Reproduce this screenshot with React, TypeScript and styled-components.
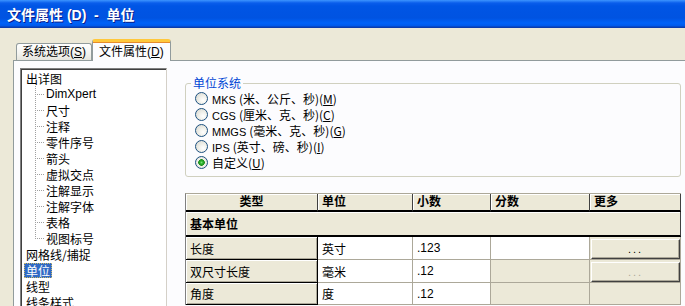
import React from 'react'
import styled, { createGlobalStyle } from 'styled-components'

const GlobalStyle = createGlobalStyle`
  html, body {
    margin: 0;
    padding: 0;
    background: #ECE9D8;
    overflow: hidden;
  }
  body {
    font-family: "Liberation Sans", "Noto Sans CJK SC", sans-serif;
    font-size: 12px;
    color: #000;
  }
`

const Window = styled.div`
  width: 685px;
  height: 306px;
  display: flex;
  flex-direction: column;
  overflow: hidden;
  background: #ECE9D8;
`

const TitleBar = styled.div`
  height: 28px;
  flex-shrink: 0;
  display: flex;
  align-items: center;
  padding-left: 7px;
  box-sizing: border-box;
  background: linear-gradient(
    to bottom,
    #3D95FF 0,
    #0A5DEB 3px,
    #0055E5 6px,
    #0053E1 18px,
    #0062F8 23px,
    #0059EA 26px,
    #0A3CAE 27px,
    #0A3CAE 28px
  );
  color: #fff;
  font: bold 14px "Liberation Sans", "Noto Sans CJK SC", sans-serif;
  text-shadow: 1px 1px 0 #0A1E8C;
  white-space: pre;
`

const Body = styled.div`
  flex: 1;
  min-height: 0;
  display: flex;
  flex-direction: column;
  padding: 11px 0 0 13px;
`

const TabStrip = styled.div`
  display: flex;
  align-items: flex-start;
  height: 21px;
  padding-left: 3px;
  position: relative;
  z-index: 1;
`

const Tab = styled.div<{ $active?: boolean }>`
  box-sizing: border-box;
  height: ${(p) => (p.$active ? '22px' : '17px')};
  margin-top: ${(p) => (p.$active ? '0' : '4px')};
  padding: ${(p) => (p.$active ? '2px 6px 0' : '0 5px')};
  line-height: 16px;
  border: 1px solid #919B9C;
  border-bottom: none;
  border-radius: 3px 3px 0 0;
  background: ${(p) =>
    p.$active ? '#FCFCFE' : 'linear-gradient(to bottom, #FFFFFF, #F3F3EF 60%, #E6E5DD)'};
  border-top: ${(p) => (p.$active ? '3px solid #FFC83C' : '1px solid #919B9C')};
  box-shadow: ${(p) => (p.$active ? 'inset 0 1px 0 #E68B2C' : 'none')};
  white-space: nowrap;
  font-family: "Liberation Sans", "Noto Sans CJK SC", sans-serif;
  font-size: 12px;
`

const U = styled.span`
  text-decoration: underline;
`

const TabPanel = styled.div`
  flex: 1;
  min-height: 0;
  display: flex;
  gap: 18px;
  padding: 7px 0 0 6px;
  background: #FCFCFE;
  border-top: 1px solid #919B9C;
  border-left: 1px solid #919B9C;
`

const TreeBox = styled.div`
  width: 147px;
  flex-shrink: 0;
  box-sizing: border-box;
  background: #fff;
  border-top: 1px solid #808080;
  border-left: 1px solid #808080;
  border-right: 1px solid #D4D0C8;
  box-shadow: inset 1px 1px 0 #404040;
  padding: 1px 0 0 3px;
  font-family: "Noto Sans CJK SC", sans-serif;
`

const TreeRow = styled.div`
  display: flex;
  align-items: center;
  height: 16px;
`

const ChildRow = styled(TreeRow)`
  padding-left: 11px;
`

const Connector = styled.span<{ $last?: boolean }>`
  width: 9px;
  height: 16px;
  flex-shrink: 0;
  background:
    repeating-linear-gradient(to bottom, #A0A0A0 0 1px, transparent 1px 2px) 0 0 /
      1px ${(p) => (p.$last ? '8px' : '16px')} no-repeat,
    repeating-linear-gradient(to right, #A0A0A0 0 1px, transparent 1px 2px) 0 8px / 9px 1px no-repeat;
`

const TreeLabel = styled.span<{ $selected?: boolean; $latin?: boolean }>`
  padding: 0 2px;
  line-height: 15px;
  font-size: 12px;
  white-space: nowrap;
  font-family: ${(p) => (p.$latin ? '"Liberation Sans", sans-serif' : '"Noto Sans CJK SC", sans-serif')};
  background: ${(p) => (p.$selected ? '#316AC5' : 'transparent')};
  color: ${(p) => (p.$selected ? '#fff' : '#000')};
  outline: ${(p) => (p.$selected ? '1px dotted #C9B86A' : 'none')};
  outline-offset: -1px;
`

const RightCol = styled.div`
  width: 496px;
  flex-shrink: 0;
  display: flex;
  flex-direction: column;
  gap: 16px;
  margin-top: 7px;
`

const GroupBox = styled.fieldset`
  margin: 0;
  padding: 0 0 6px 9px;
  border: 1px solid #D0D0BF;
  border-radius: 3px;
  min-width: 0;
`

const Legend = styled.legend`
  margin-left: -4px;
  padding: 0 2px;
  line-height: 16px;
  color: #0046D5;
  font-family: "Noto Sans CJK SC", sans-serif;
  font-size: 12px;
`

const RadioList = styled.div`
  display: flex;
  flex-direction: column;
  margin-top: -1px;
`

const RadioRow = styled.label`
  display: flex;
  align-items: center;
  gap: 4px;
  height: 16px;
  white-space: nowrap;
  font-family: "Noto Sans CJK SC", sans-serif;
  font-size: 12px;
`

const RadioDot = styled.span<{ $checked?: boolean }>`
  width: 11px;
  height: 11px;
  border: 1px solid #1C5180;
  border-radius: 50%;
  flex-shrink: 0;
  background: ${(p) =>
    p.$checked
      ? 'radial-gradient(circle, #7BE07B 0, #2DB22D 1.5px, #1E8E1E 3px, #F2F2EC 3.6px, #DCDCD4 100%)'
      : 'radial-gradient(circle at 65% 65%, #FFFFFF 0, #F0F0EA 40%, #D4D4CC 100%)'};
`

const Latin = styled.span`
  font-family: "Liberation Sans", sans-serif;
  font-size: 11px;
`

const Grid = styled.table`
  width: 496px;
  table-layout: fixed;
  border-collapse: separate;
  border-spacing: 0;
  border-top: 1px solid #ACA899;
  border-left: 1px solid #808080;
  font-family: "Liberation Sans", "Noto Sans CJK SC", sans-serif;
  font-size: 12px;
`

const HeadCell = styled.th<{ $center?: boolean }>`
  height: 16px;
  padding: 0 4px;
  text-align: ${(p) => (p.$center ? 'center' : 'left')};
  font-weight: bold;
  background: #ECE9D8;
  border-right: 1px solid #404040;
  border-bottom: 2px solid #000;
  box-shadow: inset 1px 1px 0 #fff;
  line-height: 15px;
  white-space: nowrap;
  overflow: hidden;
`

const SectionCell = styled.td`
  height: 23px;
  padding: 0 4px;
  font-weight: bold;
  background: #ECE9D8;
  border-right: 1px solid #404040;
  border-bottom: 2px solid #000;
  box-shadow: inset 1px 1px 0 #fff;
`

const NameCell = styled.td`
  height: 21px;
  padding: 0 4px;
  background: #ECE9D8;
  border-right: 1px solid #000;
  border-bottom: 1px solid #000;
  box-shadow: inset 1px 1px 0 #fff, inset -1px -1px 0 #ACA899;
  white-space: nowrap;
`

const ValueCell = styled.td<{ $disabled?: boolean }>`
  height: 21px;
  padding: 0 4px;
  background: ${(p) => (p.$disabled ? '#ECE9D8' : '#fff')};
  border-right: 1px solid #ACA899;
  border-bottom: 1px solid #ACA899;
  white-space: nowrap;
`

const ButtonCell = styled.td`
  height: 21px;
  padding: 1px 0 0 1px;
  background: #ECE9D8;
  border-right: 1px solid #ACA899;
  border-bottom: 1px solid #ACA899;
`

const MoreButton = styled.div<{ $disabled?: boolean }>`
  box-sizing: border-box;
  height: 20px;
  display: flex;
  align-items: center;
  justify-content: center;
  background: #ECE9D8;
  border: 1px solid;
  border-color: #fff #404040 #404040 #fff;
  box-shadow: inset -1px -1px 0 #ACA899;
  color: ${(p) => (p.$disabled ? '#ACA899' : '#000')};
  letter-spacing: 2px;
  font-size: 11px;
`

const childItems = ['DimXpert', '尺寸', '注释', '零件序号', '箭头', '虚拟交点', '注解显示', '注解字体', '表格', '视图标号']

const radios: { label: React.ReactNode; checked?: boolean }[] = [
  { label: <><Latin>MKS </Latin>(米、公斤、秒)(<U>M</U>)</> },
  { label: <><Latin>CGS </Latin>(厘米、克、秒)(<U>C</U>)</> },
  { label: <><Latin>MMGS </Latin>(毫米、克、秒)(<U>G</U>)</> },
  { label: <><Latin>IPS </Latin>(英寸、磅、秒)(<U>I</U>)</> },
  { label: <>自定义(<U>U</U>)</>, checked: true },
]

const rows = [
  { name: '长度', unit: '英寸', dec: '.123', fracOn: true, more: 'on' },
  { name: '双尺寸长度', unit: '毫米', dec: '.12', fracOn: false, more: 'off' },
  { name: '角度', unit: '度', dec: '.12', fracOn: false, more: 'none' },
]

const App = () => {
  return (
    <Window>
      <GlobalStyle />
      <TitleBar>文件属性 (D)  -  单位</TitleBar>
      <Body>
        <TabStrip>
          <Tab>系统选项(<U>S</U>)</Tab>
          <Tab $active>文件属性(<U>D</U>)</Tab>
        </TabStrip>
        <TabPanel>
          <TreeBox>
            <TreeRow>
              <TreeLabel>出详图</TreeLabel>
            </TreeRow>
            {childItems.map((item, i) => (
              <ChildRow key={item}>
                <Connector $last={i === childItems.length - 1} />
                <TreeLabel $latin={item === 'DimXpert'}>{item}</TreeLabel>
              </ChildRow>
            ))}
            <TreeRow>
              <TreeLabel>网格线/捕捉</TreeLabel>
            </TreeRow>
            <TreeRow>
              <TreeLabel $selected>单位</TreeLabel>
            </TreeRow>
            <TreeRow>
              <TreeLabel>线型</TreeLabel>
            </TreeRow>
            <TreeRow>
              <TreeLabel>线条样式</TreeLabel>
            </TreeRow>
          </TreeBox>
          <RightCol>
            <GroupBox>
              <Legend>单位系统</Legend>
              <RadioList>
                {radios.map((r, i) => (
                  <RadioRow key={i}>
                    <RadioDot $checked={r.checked} />
                    <span>{r.label}</span>
                  </RadioRow>
                ))}
              </RadioList>
            </GroupBox>
            <Grid>
              <colgroup>
                <col style={{ width: 132 }} />
                <col style={{ width: 95 }} />
                <col style={{ width: 78 }} />
                <col style={{ width: 99 }} />
                <col style={{ width: 91 }} />
              </colgroup>
              <thead>
                <tr>
                  <HeadCell $center>类型</HeadCell>
                  <HeadCell>单位</HeadCell>
                  <HeadCell>小数</HeadCell>
                  <HeadCell>分数</HeadCell>
                  <HeadCell>更多</HeadCell>
                </tr>
              </thead>
              <tbody>
                <tr>
                  <SectionCell colSpan={5}>基本单位</SectionCell>
                </tr>
                {rows.map((r) => (
                  <tr key={r.name}>
                    <NameCell>{r.name}</NameCell>
                    <ValueCell>{r.unit}</ValueCell>
                    <ValueCell>{r.dec}</ValueCell>
                    <ValueCell $disabled={!r.fracOn} />
                    {r.more === 'none' ? (
                      <ValueCell $disabled />
                    ) : (
                      <ButtonCell>
                        <MoreButton $disabled={r.more === 'off'}>...</MoreButton>
                      </ButtonCell>
                    )}
                  </tr>
                ))}
              </tbody>
            </Grid>
          </RightCol>
        </TabPanel>
      </Body>
    </Window>
  )
}

export default App
